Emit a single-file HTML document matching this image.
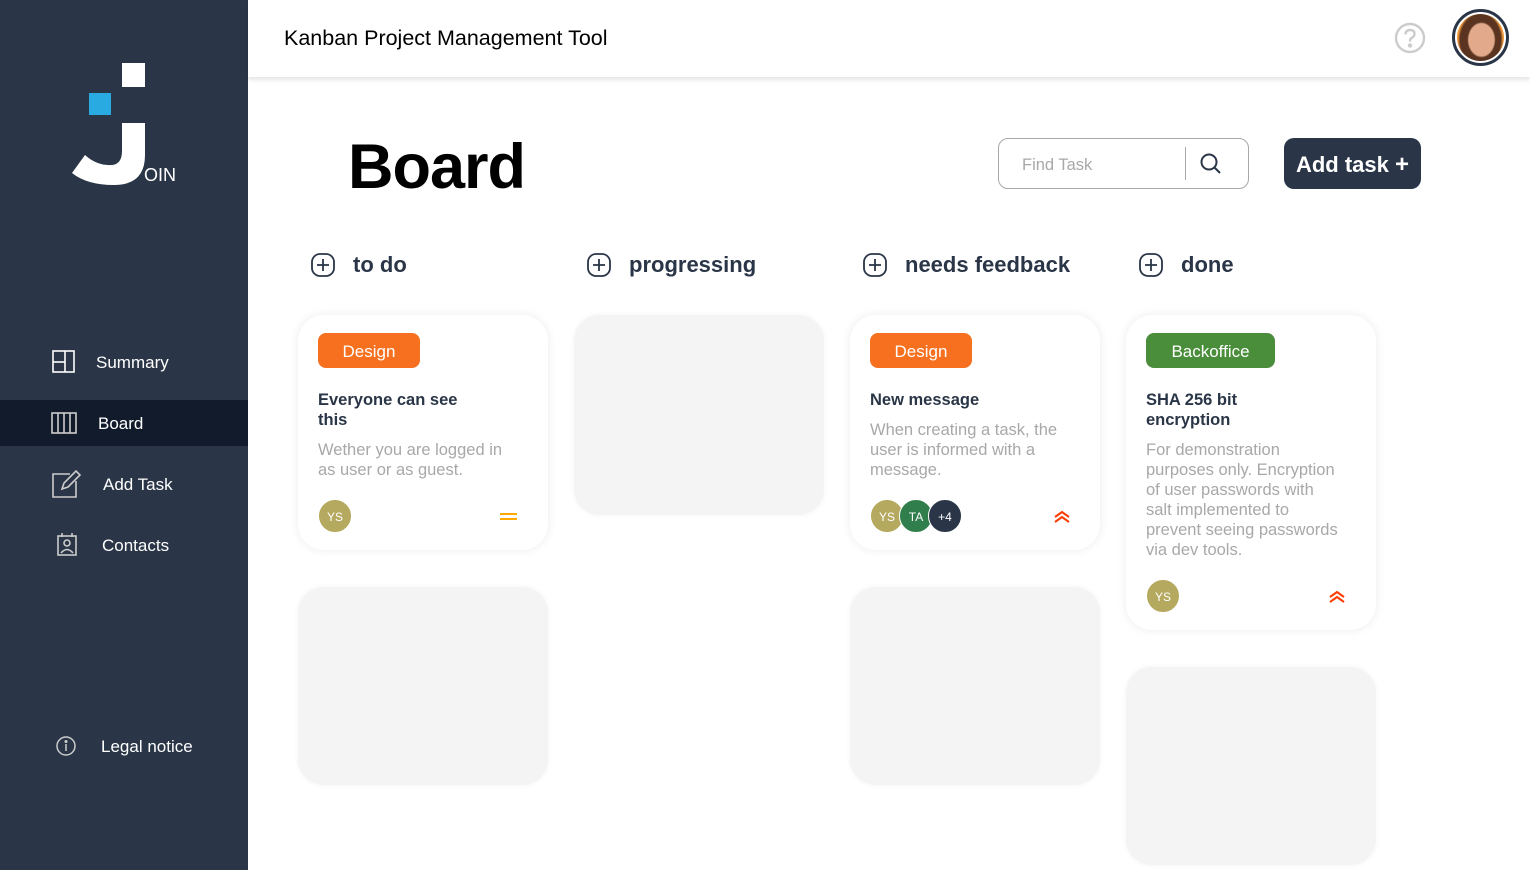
<!DOCTYPE html>
<html><head><meta charset="utf-8"><style>
*{box-sizing:border-box;margin:0;padding:0}
body{width:1530px;height:870px;overflow:hidden;font-family:"Liberation Sans",sans-serif;background:#fff;position:relative}
.side{position:absolute;left:0;top:0;width:248px;height:870px;background:#2a3647}
.nav{position:absolute;left:0;width:248px;height:46px;color:#fff;font-size:17px;display:flex;align-items:center}
.nav svg{position:absolute}
.nav span{position:absolute;top:14px}
.hdr{position:absolute;left:248px;top:0;right:0;height:77px;background:#fff;box-shadow:0 3px 4px rgba(0,0,0,.1)}
.card{position:absolute;width:250px;border-radius:26px;background:#fff;box-shadow:0 0 10px rgba(0,0,0,.08)}
.ph{position:absolute;width:250px;border-radius:26px;background:#f4f4f4;box-shadow:0 0 6px rgba(0,0,0,.05)}
.tag{position:absolute;left:20px;top:18px;height:35px;border-radius:8px;color:#fff;font-size:17px;display:flex;align-items:center;justify-content:center;padding-top:2px}
.t{position:absolute;left:20px;font-weight:bold;font-size:16.5px;color:#2a3647;line-height:20px}
.d{position:absolute;left:20px;font-size:16.5px;color:#a8a8a8;line-height:20px}
.av{position:absolute;width:34px;height:34px;border-radius:50%;border:1.5px solid #fff;color:#fff;font-size:12px;display:flex;align-items:center;justify-content:center;padding-top:2px}
.colh{position:absolute;top:252px;font-size:22px;font-weight:bold;color:#2a3647;display:flex;align-items:center}
.colh svg{margin-right:18px}
</style></head><body>
<div class="side">
<svg style="position:absolute;left:72px;top:63px" width="110" height="125" viewBox="0 0 110 125">
<rect x="17" y="30" width="22" height="22" fill="#29abe2"/>
<rect x="50" y="0" width="23" height="24" fill="#fff"/>
<path d="M50 60 H73 V92 Q73 122 42 122 Q15 122 0 110 L13 92 Q25 103 40 102 Q50 101 50 88 Z" fill="#fff"/>
<text x="72" y="118" fill="#fff" font-size="18" font-family="Liberation Sans">OIN</text>
</svg>
<div class="nav" style="top:339px"><svg style="left:52px" width="24" height="24" viewBox="0 0 24 24" fill="none" stroke="#fff" stroke-width="1.6"><rect x="1" y="1" width="21" height="21"/><line x1="13" y1="1" x2="13" y2="22"/><line x1="1" y1="12" x2="13" y2="12"/></svg><span style="left:96px">Summary</span></div>
<div class="nav" style="top:400px;background:#111b2c"><svg style="left:51px" width="26" height="22" viewBox="0 0 26 22" fill="none" stroke="#ccc" stroke-width="1.6"><rect x="1" y="1" width="24" height="20"/><line x1="7" y1="1" x2="7" y2="21"/><line x1="13" y1="1" x2="13" y2="21"/><line x1="19" y1="1" x2="19" y2="21"/></svg><span style="left:98px">Board</span></div>
<div class="nav" style="top:461px"><svg style="left:52px" width="30" height="30" viewBox="0 0 30 30" fill="none" stroke="#ccc" stroke-width="1.6"><path d="M18 5H1V28H24V12"/><path d="M10 20L12 14L24 2L28 6L16 18Z"/></svg><span style="left:103px">Add Task</span></div>
<div class="nav" style="top:522px"><svg style="left:57px" width="20" height="24" viewBox="0 0 20 24" fill="none" stroke="#ccc" stroke-width="1.6"><rect x="1" y="3" width="18" height="19"/><line x1="5" y1="0" x2="5" y2="4"/><line x1="15" y1="0" x2="15" y2="4"/><circle cx="10" cy="10" r="3"/><path d="M4 20Q10 13 16 20"/></svg><span style="left:102px">Contacts</span></div>
<div class="nav" style="top:723px"><svg style="left:56px" width="20" height="20" viewBox="0 0 20 20" fill="none" stroke="#ccc" stroke-width="1.5"><circle cx="10" cy="10" r="9"/><line x1="10" y1="8" x2="10" y2="15"/><circle cx="10" cy="5.5" r=".8" fill="#ccc"/></svg><span style="left:101px">Legal notice</span></div>
</div>
<div class="hdr">
<div style="position:absolute;left:36px;top:26px;font-size:21.5px;color:#000">Kanban Project Management Tool</div>
<svg style="position:absolute;left:1146px;top:22px" width="32" height="32" viewBox="0 0 32 32" fill="none" stroke="#ccc" stroke-width="2.4"><circle cx="16" cy="16" r="14"/><path d="M11.5 12.5Q11.5 8 16 8Q20.5 8 20.5 12Q20.5 14.5 17.5 16Q16 17 16 19.5"/><circle cx="16" cy="23.5" r="1" fill="#ccc"/></svg>
<div style="position:absolute;left:1204px;top:9px;width:57px;height:57px;border-radius:50%;border:3px solid #2a3647;background:#fff;padding:2px"><div style="width:100%;height:100%;border-radius:50%;background:radial-gradient(ellipse 30% 38% at 52% 55%,#e2a98a 0 90%,transparent 100%),radial-gradient(ellipse 48% 60% at 50% 55%,#5a3420 0 90%,transparent 100%),#f29a3a"></div></div>
</div>
<div style="position:absolute;left:348px;top:131px;font-size:63px;font-weight:bold;color:#000;letter-spacing:-1px">Board</div>
<div style="position:absolute;left:998px;top:138px;width:251px;height:51px;border:1px solid #a8a8a8;border-radius:10px">
<span style="position:absolute;left:23px;top:17px;font-size:16.5px;color:#a8a8a8">Find Task</span>
<div style="position:absolute;left:186px;top:8px;width:1px;height:33px;background:#a8a8a8"></div>
<svg style="position:absolute;left:201px;top:14px" width="22" height="22" viewBox="0 0 22 22" fill="none" stroke="#2a3647" stroke-width="2"><circle cx="9" cy="9" r="7.5"/><line x1="14.5" y1="14.5" x2="20" y2="20"/></svg>
</div>
<div style="position:absolute;left:1284px;top:138px;width:137px;height:51px;background:#2a3647;border-radius:10px;color:#fff;font-size:22px;font-weight:bold;display:flex;align-items:center;justify-content:center;padding-top:2px">Add task&nbsp;<span style="font-size:24px">+</span></div>
<div class="colh" style="left:311px"><svg width="24" height="24" viewBox="0 0 24 24" fill="none" stroke="#2a3647" stroke-width="1.8"><rect x="1" y="1" width="22" height="22" rx="8"/><line x1="12" y1="6" x2="12" y2="18"/><line x1="6" y1="12" x2="18" y2="12"/></svg>to do</div>
<div class="colh" style="left:587px"><svg width="24" height="24" viewBox="0 0 24 24" fill="none" stroke="#2a3647" stroke-width="1.8"><rect x="1" y="1" width="22" height="22" rx="8"/><line x1="12" y1="6" x2="12" y2="18"/><line x1="6" y1="12" x2="18" y2="12"/></svg>progressing</div>
<div class="colh" style="left:863px"><svg width="24" height="24" viewBox="0 0 24 24" fill="none" stroke="#2a3647" stroke-width="1.8"><rect x="1" y="1" width="22" height="22" rx="8"/><line x1="12" y1="6" x2="12" y2="18"/><line x1="6" y1="12" x2="18" y2="12"/></svg>needs feedback</div>
<div class="colh" style="left:1139px"><svg width="24" height="24" viewBox="0 0 24 24" fill="none" stroke="#2a3647" stroke-width="1.8"><rect x="1" y="1" width="22" height="22" rx="8"/><line x1="12" y1="6" x2="12" y2="18"/><line x1="6" y1="12" x2="18" y2="12"/></svg>done</div>

<div class="card" style="left:298px;top:315px;height:235px">
<div class="tag" style="width:102px;background:#f6701f">Design</div>
<div class="t" style="top:75px">Everyone can see<br>this</div>
<div class="d" style="top:125px">Wether you are logged in<br>as user or as guest.</div>
<div class="av" style="left:20px;top:184px;background:#b5a95f">YS</div>
<div style="position:absolute;left:202px;top:198px;width:17px;height:2px;background:#ffa800"></div>
<div style="position:absolute;left:202px;top:203px;width:17px;height:2px;background:#ffa800"></div>
</div>
<div class="ph" style="left:298px;top:587px;height:198px"></div>
<div class="ph" style="left:574px;top:315px;height:200px"></div>
<div class="card" style="left:850px;top:315px;height:235px">
<div class="tag" style="width:102px;background:#f6701f">Design</div>
<div class="t" style="top:75px">New message</div>
<div class="d" style="top:105px">When creating a task, the<br>user is informed with a<br>message.</div>
<div class="av" style="left:20px;top:184px;background:#b5a95f">YS</div>
<div class="av" style="left:49px;top:184px;background:#2f7e4b">TA</div>
<div class="av" style="left:78px;top:184px;background:#2a3647">+4</div>
<svg style="position:absolute;left:203px;top:195px" width="18" height="14" viewBox="0 0 18 14" fill="none" stroke="#ff3d00" stroke-width="2"><path d="M2 7L9 2L16 7M2 12L9 7L16 12"/></svg>
</div>
<div class="ph" style="left:850px;top:587px;height:198px"></div>
<div class="card" style="left:1126px;top:315px;height:315px">
<div class="tag" style="width:129px;background:#4a8d3a">Backoffice</div>
<div class="t" style="top:75px">SHA 256 bit<br>encryption</div>
<div class="d" style="top:125px">For demonstration<br>purposes only. Encryption<br>of user passwords with<br>salt implemented to<br>prevent seeing passwords<br>via dev tools.</div>
<div class="av" style="left:20px;top:264px;background:#b5a95f">YS</div>
<svg style="position:absolute;left:202px;top:275px" width="18" height="14" viewBox="0 0 18 14" fill="none" stroke="#ff3d00" stroke-width="2"><path d="M2 7L9 2L16 7M2 12L9 7L16 12"/></svg>
</div>
<div class="ph" style="left:1126px;top:667px;height:198px"></div>
</body></html>
